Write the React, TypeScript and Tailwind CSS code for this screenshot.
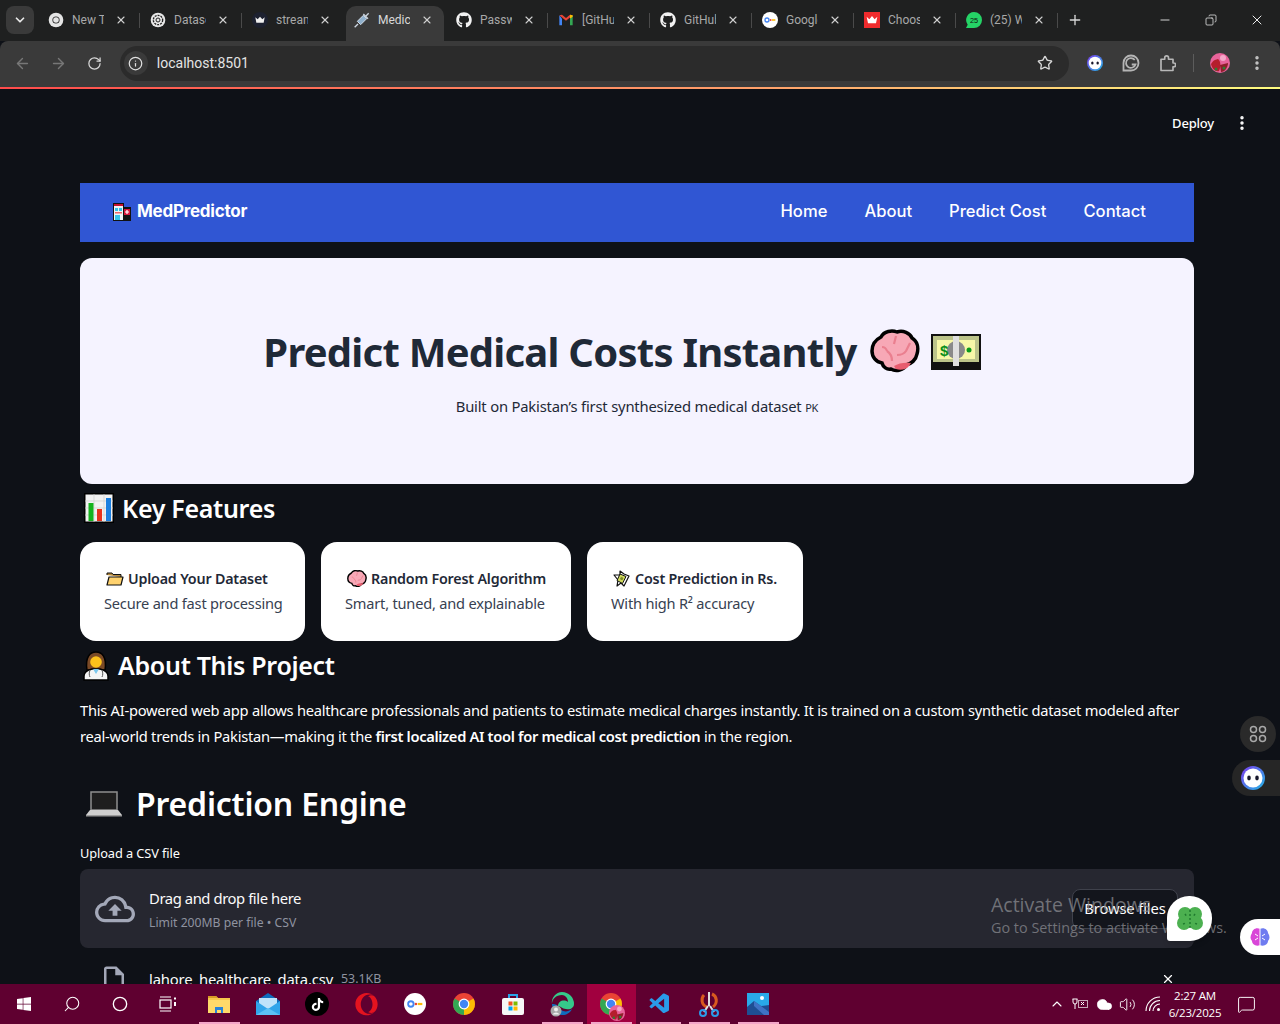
import React from "react";
import { ChevronDown, X, Plus, Minus, ArrowLeft, ArrowRight, RotateCw, Info, Star, EllipsisVertical, Copy, ChevronUp, Volume2, MessageSquare, Search, Circle, Cloud } from "lucide-react";
import { FaGithub, FaTiktok, FaWindows, FaOpera } from "react-icons/fa";
import { VscVscode } from "react-icons/vsc";
import { MdOutlineCloudUpload, MdOutlineInsertDriveFile } from "react-icons/md";

const body = "font-['Noto_Sans','Open_Sans',sans-serif]";

const ChromeLogo = ({ s = 16, mono = false }: { s?: number; mono?: boolean }) => (
  <svg width={s} height={s} viewBox="0 0 24 24">
    <circle cx="12" cy="12" r="11" fill={mono ? "#e5e5e5" : "#ea4335"} />
    {!mono && <path d="M12 12 L2.500 6.500 A11 11 0 0 0 12 23 Z" fill="#34a853" />}
    {!mono && <path d="M12 12 L12 23 A11 11 0 0 0 21.500 6.500 Z" fill="#fbbc04" />}
    <circle cx="12" cy="12" r="5.400" fill={mono ? "#202020" : "#fff"} />
    <circle cx="12" cy="12" r="4.200" fill={mono ? "#e5e5e5" : "#4285f4"} />
  </svg>
);

const PwKey = ({ s = 16 }: { s?: number }) => (
  <svg width={s} height={s} viewBox="0 0 24 24">
    <circle cx="12" cy="12" r="12" fill="#fff" />
    <circle cx="7.500" cy="12" r="3" fill="none" stroke="#4285f4" strokeWidth="2" />
    <circle cx="13" cy="12" r="1.400" fill="#ea4335" />
    <path d="M15 12h5" stroke="#fbbc04" strokeWidth="2.400" />
  </svg>
);

const Gmail = () => (
  <svg width="16" height="16" viewBox="0 0 24 24">
    <path d="M2 5v15h4V10z" fill="#4285f4" />
    <path d="M22 5v15h-4V10z" fill="#34a853" />
    <path d="M2 5l10 8 10-8-4-1-6 5-6-5z" fill="#ea4335" />
    <path d="M22 5l-4-1v6l4-3z" fill="#fbbc04" />
  </svg>
);

const Crown = () => (
  <svg width="16" height="16" viewBox="0 0 24 24">
    <rect width="24" height="24" fill="#ef2b2d" />
    <path d="M4 7l4 4 4-5 4 5 4-4-2 10H6z" fill="#fff" />
  </svg>
);

const tabs: { t: string; icon: React.ReactNode; active?: boolean; noSep?: boolean }[] = [
  { t: "New Tab", icon: <ChromeLogo mono /> },
  { t: "Datasets", icon: <svg width="16" height="16" viewBox="0 0 24 24"><circle cx="12" cy="12" r="11" fill="#e8e8e8" /><circle cx="12" cy="12" r="7" fill="none" stroke="#222" strokeWidth="2" strokeDasharray="3 1.500" /><circle cx="12" cy="12" r="3" fill="none" stroke="#222" strokeWidth="1.500" /></svg> },
  { t: "streamlit", noSep: true, icon: <svg width="16" height="16" viewBox="0 0 24 24"><circle cx="12" cy="12" r="12" fill="#1d2130" /><path d="M5 8l3.500 3L12 7l3.500 4L19 8l-1.500 8h-11z" fill="#f0f0f0" /></svg> },
  { t: "Medical", active: true, icon: <svg width="16" height="16" viewBox="0 0 24 24"><path d="M1 23l5-5" stroke="#cfd8e3" strokeWidth="2" /><path d="M5 14l5 5 9-9-5-5z" fill="#8fb0cc" stroke="#cfd8e3" strokeWidth="1.500" /><path d="M14 3l7 7M18 6l4-4" stroke="#c9d3dd" strokeWidth="2" /></svg> },
  { t: "Passwords", icon: <FaGithub size={16} color="#f2f2f2" /> },
  { t: "[GitHub]", icon: <Gmail /> },
  { t: "GitHub", icon: <FaGithub size={16} color="#f2f2f2" /> },
  { t: "Google", icon: <PwKey /> },
  { t: "Choose", icon: <Crown /> },
  { t: "(25) WhatsApp", icon: <svg width="16" height="16" viewBox="0 0 24 24"><path d="M12 0a12 12 0 0 1 0 24H0l2.500-5A12 12 0 0 1 12 0z" fill="#25d366" /><text x="12" y="16" fontSize="11" textAnchor="middle" fill="#111" fontFamily="Liberation Sans">25</text></svg> },
];

const Tab = ({ t, icon, active, noSep }: { t: string; icon: React.ReactNode; active?: boolean; noSep?: boolean }) => (
  <div className="relative flex h-[35px] w-[102px] shrink-0 items-center pb-[7px] pl-[10px]">
    {active && <span className="absolute inset-y-0 left-[2px] right-[2px] rounded-t-[10px] bg-[#3a3a3a]" />}
    <span className="relative flex w-4 shrink-0 justify-center">{icon}</span>
    <span className={`relative ml-2 w-[32px] overflow-hidden whitespace-nowrap font-['Roboto',sans-serif] text-[12px] ${active ? "text-[#d8d8d8]" : "text-[#a8a8a8]"}`}>{t}</span>
    <X size={12} strokeWidth={2.200} className="relative ml-[11px] shrink-0 text-[#d0d0d0]" />
    {!active && !noSep && <span className="absolute right-0 top-[7px] h-[15px] w-px bg-[#4a4a4a]" />}
  </div>
);

const TabBar = () => (
  <div className="flex h-[41px] shrink-0 items-end bg-[#1f2020] pl-[6px]">
    <div className="mb-[7px] mr-[4px] flex h-[28px] w-[28px] items-center justify-center rounded-lg bg-[#3a3a3a]">
      <ChevronDown size={14} strokeWidth={3} className="text-[#e8e8e8]" />
    </div>
    {tabs.map((x) => <Tab key={x.t} {...x} />)}
    <Plus size={16} strokeWidth={2} className="mb-[13px] ml-[9px] text-[#d8d8d8]" />
    <div className="mb-[13px] ml-auto flex items-center pr-[15px] text-[#ececec]">
      <Minus size={14} strokeWidth={1.500} />
      <Copy size={12} strokeWidth={1.500} className="ml-[33px] -scale-x-100" />
      <X size={16} strokeWidth={1.500} className="ml-[32px]" />
    </div>
  </div>
);

const ExtFace = ({ s = 16 }: { s?: number }) => (
  <svg width={s} height={s} viewBox="0 0 24 24">
    <defs><linearGradient id="fg" x1="0" y1="0" x2="1" y2="1"><stop offset="0" stopColor="#7c3aed" /><stop offset="1" stopColor="#22b8e6" /></linearGradient></defs>
    <circle cx="12" cy="12" r="12" fill="url(#fg)" />
    <circle cx="12" cy="12" r="9.500" fill="#fff" />
    <ellipse cx="8" cy="12" rx="1.800" ry="2.400" fill="#17172c" />
    <ellipse cx="16" cy="12" rx="1.800" ry="2.400" fill="#17172c" />
  </svg>
);

const Avatar = ({ s = 20 }: { s?: number }) => (
  <svg width={s} height={s} viewBox="0 0 20 20">
    <circle cx="10" cy="10" r="10" fill="#e8639a" />
    <path d="M1 11c3-5 5-4 7-5 3 2 3 8 1 12-3 1-7-2-8-7z" fill="#b51e2c" />
    <path d="M10 12l8-2c0 4-3 9-7 9z" fill="#8f1f2a" />
    <circle cx="6" cy="16" r="1.500" fill="#2f7d32" /><circle cx="14" cy="15" r="1.500" fill="#2f7d32" />
    <circle cx="13" cy="5" r="3" fill="#f4a7c8" />
  </svg>
);

const Toolbar = () => (
  <div className="flex h-[46px] shrink-0 items-center rounded-t-[8px] bg-[#3a3a3a] pb-[2px] pl-[14px] pr-[14px]">
    <ArrowLeft size={17} strokeWidth={2} className="text-[#777]" />
    <ArrowRight size={17} strokeWidth={2} className="ml-[19px] text-[#777]" />
    <RotateCw size={15} strokeWidth={2} className="ml-[20px] text-[#d8d8d8]" />
    <div className="ml-[18px] flex h-[35px] w-[953px] items-center rounded-full bg-[#2b2b2b] pl-[4px] pr-[16px]">
      <span className="flex h-[24px] w-[24px] items-center justify-center rounded-full bg-[#3a3a3a]"><Info size={15} className="text-[#e0e0e0]" /></span>
      <span className="ml-[9px] font-['Roboto',sans-serif] text-[14px] text-[#e4e4e4]">localhost:8501</span>
      <Star size={16} strokeWidth={2} className="ml-auto text-[#d8d8d8]" />
    </div>
    <div className="ml-[18px] flex items-center">
      <ExtFace />
      <svg className="ml-[19px]" width="18" height="18" viewBox="0 0 24 24" fill="none" stroke="#b5b5b5" strokeWidth="2.400"><path d="M12 2a10 10 0 0 0-10 10v10h10a10 10 0 0 0 0-20z" /><path d="M17 8a6.500 6.500 0 1 0 1 6h-5" /></svg>
      <svg className="ml-[18px]" width="18" height="18" viewBox="0 0 24 24" fill="none" stroke="#b8b8b8" strokeWidth="2.200" strokeLinejoin="round"><path d="M4 7h5V5a2.500 2.500 0 0 1 5 0v2h6v5h1a2.500 2.500 0 0 1 0 5h-1v5H4z" /></svg>
      <span className="ml-[17px] h-[18px] w-px bg-[#5c5c5c]" />
      <span className="ml-[16px]"><Avatar /></span>
      <EllipsisVertical size={18} strokeWidth={2.600} className="ml-[18px] text-[#c8c8c8]" />
    </div>
  </div>
);

/* ---------- emoji drawings ---------- */
const Brain = ({ s = 50 }: { s?: number }) => (
  <svg width={s} height={s} viewBox="0 0 50 50" className="shrink-0">
    <path d="M2 24c0-8 5-12 9-14 3-6 11-7 16-5 6-2 13 1 15 6 5 3 7 9 5 16-1 6-6 10-11 11-2 5-10 7-15 4-4 1-8-2-9-6-6-1-10-6-10-12z" fill="#f7a8b6" stroke="#000" strokeWidth="3.500" />
    <path d="M26 42c5 2 11 0 13-3l2-3c-5-1-13 0-17 3z" fill="#e85d6f" />
    <path d="M17 24c3 2 5 5 5 10M12 20c2 0 4 1 5 4M26 9l-2 8M36 24c-2 3-6 4-9 4M40 16l-4 8" fill="none" stroke="#ea7f8f" strokeWidth="2.200" />
  </svg>
);

const Money = ({ s = 50 }: { s?: number }) => (
  <svg width={s} height={(s * 36) / 50} viewBox="0 0 50 36" className="shrink-0">
    <rect x="0" y="0" width="50" height="36" fill="#111" />
    <rect x="2" y="2" width="46" height="26" fill="#bcc48a" />
    <rect x="6" y="6" width="38" height="19" fill="#f7f7a8" />
    <circle cx="25" cy="16" r="9" fill="#8a8a8a" />
    <text x="9" y="22" fontSize="15" fontWeight="700" fill="#0a8f1b" fontFamily="Liberation Sans">$</text>
    <circle cx="38" cy="16" r="2.500" fill="#0a9a1b" />
    <rect x="22" y="2" width="6" height="30" fill="#dfdfdf" />
  </svg>
);

const Hospital = () => (
  <svg width="18" height="18" viewBox="0 0 18 18" className="shrink-0">
    <rect x="0" y="0" width="11" height="18" fill="#111" />
    <rect x="1" y="1" width="9" height="16" fill="#eef3f6" />
    <rect x="1" y="1" width="9" height="2" fill="#c8102e" />
    <rect x="2" y="5" width="3" height="3" fill="#35c4e8" /><rect x="6" y="5" width="3" height="3" fill="#35c4e8" />
    <rect x="2" y="9" width="7" height="1.500" fill="#e66" /><rect x="2" y="12" width="5" height="5" fill="#35c4e8" />
    <rect x="10" y="4" width="8" height="14" fill="#111" />
    <rect x="11" y="6" width="6" height="6" fill="#d8163a" />
    <path d="M14 7v4M12 9h4" stroke="#fff" strokeWidth="1.200" />
  </svg>
);

const Chart = () => (
  <svg width="30" height="30" viewBox="0 0 30 30" className="shrink-0">
    <rect x="0" y="0" width="30" height="30" fill="#000" />
    <rect x="1.500" y="1.500" width="27" height="27" fill="#f2f2f2" />
    <path d="M1 8h28M1 15h28M1 22h28M10 1v28M20 1v28" stroke="#d0d0d0" strokeWidth=".7" />
    <rect x="4.500" y="10" width="5" height="18" fill="#16b31e" />
    <rect x="13" y="16" width="5" height="12" fill="#e8321c" />
    <rect x="22" y="5" width="5" height="23" fill="#1b7fe0" />
  </svg>
);

const Folder = () => (
  <svg width="18" height="14" viewBox="0 0 18 14" className="shrink-0">
    <path d="M1 3V1h5l1 1.500h8V5" fill="#b88a3a" stroke="#111" strokeWidth="1" />
    <path d="M3 5h14l-2 8H1z" fill="#ffd26e" stroke="#111" strokeWidth="1.200" strokeLinejoin="round" />
  </svg>
);

const MoneyWings = () => (
  <svg width="18" height="18" viewBox="0 0 18 18" className="shrink-0">
    <path d="M1 5l6 0 0-4 4 3 5 2-5 10-3-3-4 3 1-6z" fill="#fff" stroke="#111" strokeWidth="1.200" strokeLinejoin="round" />
    <path d="M7 4l6 2.500-3.500 7-5.500-3z" fill="#cfd85c" stroke="#111" strokeWidth="1" />
    <circle cx="8.700" cy="8.500" r="1.500" fill="#7d8a28" />
  </svg>
);

const Doctor = () => (
  <svg width="26" height="30" viewBox="0 0 26 30" className="shrink-0">
    <path d="M4 19C2 6 7 1 13 1s11 5 9 18z" fill="#7a4a26" stroke="#000" strokeWidth="1.500" />
    <circle cx="13" cy="11" r="5.800" fill="#fcc21b" />
    <path d="M1 29v-4c0-4 4-6 8-7h8c4 1 8 3 8 7v4z" fill="#f5f5f5" stroke="#000" strokeWidth="1.500" />
    <path d="M10 18l3 5 3-5z" fill="#7cc8ee" />
    <path d="M7 19c-1 3-1 5 0 7M19 19c1 3 1 5 0 7" stroke="#555" strokeWidth="1" fill="none" />
  </svg>
);

const Laptop = () => (
  <svg width="38" height="30" viewBox="0 0 38 30" className="shrink-0">
    <path d="M6 3h26v18H6z" fill="#1e1e1e" stroke="#8e8e8e" strokeWidth="1.500" />
    <path d="M5 21h28l4 5H1z" fill="#cfcfcf" />
    <rect x="1" y="26" width="36" height="1.500" fill="#9a9a9a" />
  </svg>
);

const Card = ({ icon, title, sub, cls }: { icon: React.ReactNode; title: string; sub: string; cls: string }) => (
  <div className={`flex h-[99px] flex-col justify-center rounded-2xl bg-white pl-[24px] ${cls}`}>
    <div className="flex h-[24px] items-center pl-[2px] pt-[2px] text-[14.300px] font-semibold leading-none tracking-[-0.2px] text-[#1f2937]">
      {icon}
      <span className="ml-[4px]">{title}</span>
    </div>
    <div className="mt-[1px] pb-[2px] text-[14.600px] leading-[24px] tracking-[-0.2px] text-[#374151]">{sub}</div>
  </div>
);

const Main = () => (
  <main className={`relative flex min-h-0 flex-1 flex-col overflow-hidden bg-[#0e1117] pl-[80px] pr-[86px] ${body}`}>
    <div className="flex h-[94px] shrink-0 items-start justify-end pt-[25px]">
      <div className="mr-[-57px] flex items-center">
        <span className="text-[13px] font-medium leading-[18px] tracking-[-0.2px] text-white">Deploy</span>
        <EllipsisVertical size={18} strokeWidth={2.600} className="ml-[19px] text-white" />
      </div>
    </div>

    <nav className="flex h-[59px] shrink-0 items-center justify-between bg-[#3056d3] pb-[2px] pl-[33px] pr-[48px] font-['Inter',sans-serif] text-white">
      <div className="flex items-center">
        <Hospital />
        <span className="ml-[6px] text-[17px] font-bold tracking-[-0.25px]">MedPredictor</span>
      </div>
      <div className="flex items-center gap-[37px] text-[16.600px] font-medium">
        <span>Home</span><span>About</span><span>Predict Cost</span><span>Contact</span>
      </div>
    </nav>

    <section className="mt-[16px] flex h-[226px] shrink-0 flex-col items-center rounded-xl bg-[#f5f3ff] pt-[63px]">
      <h1 className="flex h-[62px] items-center whitespace-nowrap pr-[30px] text-[40px] font-bold leading-none tracking-[-0.76px] text-[#1f2937]">
        Predict Medical Costs Instantly
        <span className="ml-[13px]"><Brain /></span>
        <span className="ml-[11px]"><Money /></span>
      </h1>
      <p className="mt-[11px] text-[14.800px] leading-[24px] tracking-[-0.2px] text-[#1f2937]">
        Built on Pakistan’s first synthesized medical dataset <span className="text-[11px]">PK</span>
      </p>
    </section>

    <h2 className="mt-[8px] flex h-[34px] shrink-0 items-center pb-[2px] pl-[4px] text-[25px] font-semibold leading-none tracking-[-0.3px] text-white">
      <Chart /><span className="ml-[8px]">Key Features</span>
    </h2>

    <div className="mt-[16px] flex shrink-0 gap-4">
      <Card cls="w-[225px]" icon={<Folder />} title="Upload Your Dataset" sub="Secure and fast processing" />
      <Card cls="w-[250px]" icon={<Brain s={20} />} title="Random Forest Algorithm" sub="Smart, tuned, and explainable" />
      <Card cls="w-[216px]" icon={<MoneyWings />} title="Cost Prediction in Rs." sub="With high R² accuracy" />
    </div>

    <h2 className="mt-[8px] flex h-[34px] shrink-0 items-center pb-[1px] pl-[3px] text-[25px] font-semibold leading-none tracking-[-0.3px] text-white">
      <Doctor /><span className="ml-[9px]">About This Project</span>
    </h2>

    <p className="mt-[14px] shrink-0 text-[14.700px] leading-[26px] tracking-[-0.26px] text-white">
      This AI-powered web app allows healthcare professionals and patients to estimate medical charges instantly. It is trained on a custom synthetic dataset modeled after real-world trends in Pakistan—making it the <strong className="font-semibold tracking-[-0.33px]">first localized AI tool for medical cost prediction</strong> in the region.
    </p>

    <h2 className="mt-[31px] flex h-[48px] shrink-0 items-center pl-[5px] text-[32px] font-semibold leading-none tracking-[-0.2px] text-white">
      <Laptop /><span className="ml-[13px]">Prediction Engine</span>
    </h2>

    <label className="mt-[16px] block h-[18px] shrink-0 text-[12.800px] leading-[18px] tracking-[-0.1px] text-white">Upload a CSV file</label>

    <div className="mt-[7px] flex h-[79px] shrink-0 items-center rounded-lg bg-[#262730] pl-[15px] pr-[16px]">
      <MdOutlineCloudUpload size={40} className="text-[#a3a8b8]" />
      <div className="ml-[14px]">
        <div className="text-[14.800px] leading-[24px] tracking-[-0.42px] text-[#fafafa]">Drag and drop file here</div>
        <div className="mt-[4px] text-[12.200px] leading-[18px] tracking-[0px] text-[#8f93a0]">Limit 200MB per file • CSV</div>
      </div>
      <span className="ml-auto flex h-[40px] w-[106px] items-center justify-center rounded-lg border border-[#3f414b] bg-[#13151c] text-[14.800px] tracking-[-0.15px] text-white">Browse files</span>
    </div>

    <div className="mt-[16px] flex shrink-0 items-center pl-[19px]">
      <MdOutlineInsertDriveFile size={30} className="text-[#a3a8b8]" />
      <span className="ml-[20px] text-[14.800px] leading-[24px] tracking-[-0.15px] text-[#fafafa]">lahore_healthcare_data.csv</span>
      <span className="ml-[8px] text-[12.400px] text-[#8f93a0]">53.1KB</span>
    </div>

    {/* floating overlays */}
    <div className="absolute bottom-[46px] left-[991px] font-['Open_Sans',sans-serif] text-[#8a8b90]/75">
      <div className="text-[19.500px] leading-[26px]">Activate Windows</div>
      <div className="text-[14.400px] leading-[20px]">Go to Settings to activate Windows.</div>
    </div>

    <div className="absolute bottom-[-2px] left-[1161px] text-white"><X size={14} strokeWidth={2} /></div>

    <div className="absolute left-[1240px] top-[627px] flex h-9 w-9 items-center justify-center rounded-full bg-[#2a2a2a]">
      <svg width="18" height="18" viewBox="0 0 18 18" fill="none" stroke="#a8a8a8" strokeWidth="1.500">
        <rect x="1.500" y="1.500" width="6" height="6" rx="3" /><rect x="10.500" y="1.500" width="6" height="6" rx="3" />
        <rect x="1.500" y="10.500" width="6" height="6" rx="3" /><rect x="10.500" y="10.500" width="6" height="6" rx="3" />
      </svg>
    </div>
    <div className="absolute left-[1232px] top-[671px] flex h-9 w-[48px] items-center rounded-l-full bg-[#262626] pl-[9px]"><ExtFace s={24} /></div>

    <div className="absolute left-[1167px] top-[807px] flex h-[45px] w-[45px] items-center justify-center rounded-[22px] rounded-bl-[3px] bg-white shadow-md">
      <svg width="30" height="30" viewBox="0 0 30 30">
        <circle cx="10" cy="10" r="7" fill="#4cb050" /><circle cx="20" cy="10" r="7" fill="#4cb050" />
        <circle cx="9" cy="19" r="7" fill="#4cb050" /><circle cx="21" cy="19" r="7" fill="#4cb050" />
        <path d="M15 6v20M10 10l2 3M20 10l-2 3M8 20l3-1M22 20l-3-1" stroke="#1f7a2e" strokeWidth="1.500" strokeDasharray="2 2" />
      </svg>
    </div>

    <div className="absolute left-[1240px] top-[830px] flex h-9 w-[40px] items-center rounded-l-full bg-white pl-[10px]">
      <svg width="20" height="20" viewBox="0 0 20 20">
        <path d="M10 2C6 0 2 3 2 6c-2 3-2 6 0 8 0 3 4 6 8 4z" fill="#d946d8" />
        <path d="M10 2c4-2 8 1 8 4 2 3 2 6 0 8 0 3-4 6-8 4z" fill="#6f7cf0" />
        <path d="M10 2v16M5 7l3 2M15 7l-3 2M5 13l3-2M15 13l-3-2" stroke="#fff" strokeWidth="1" />
      </svg>
    </div>
  </main>
);

const TI = ({ children, on, wide, hl, cls = "" }: { children: React.ReactNode; on?: boolean; wide?: boolean; hl?: boolean; cls?: string }) => (
  <div className={`relative flex h-full items-center justify-center ${wide ? "w-[48px]" : "w-[49px]"} ${hl ? "bg-[#a1003f]" : ""} ${cls}`}>
    {children}
    {on && <span className="absolute bottom-0 left-[4px] right-[4px] h-[2px] bg-[#f2a6c8]" />}
  </div>
);

const Taskbar = () => (
  <footer className="flex h-10 shrink-0 items-center bg-[#5f0030] text-white">
    <TI wide><FaWindows size={16} /></TI>
    <TI wide><Search size={18} strokeWidth={1.400} className="-scale-x-100" /></TI>
    <TI wide><Circle size={16} strokeWidth={2} /></TI>
    <TI wide>
      <svg width="18" height="16" viewBox="0 0 18 16" fill="none" stroke="#fff" strokeWidth="1.200"><path d="M1 1h11M1 15h11" /><rect x="1" y="4" width="11" height="8" /><rect x="15" y="1.500" width="2" height="2" fill="#fff" stroke="none" /><rect x="15" y="6" width="2" height="4" fill="#fff" stroke="none" /></svg>
    </TI>
    <TI on cls="ml-[2.500px]">
      <svg width="22" height="20" viewBox="0 0 22 20"><path d="M0 2h8l2 2h12v15H0z" fill="#f5c84c" /><path d="M0 2h8l2 2H0z" fill="#d89b25" /><path d="M0 6h22v13H0z" fill="#ffd96a" /><path d="M7 19v-6h8v6h-2v-3H9v3z" fill="#2a83d8" /></svg>
    </TI>
    <TI>
      <svg width="24" height="22" viewBox="0 0 24 22"><path d="M12 0l12 8v14H0V8z" fill="#0f6cbd" /><path d="M3 5h18v10l-9 4-9-4z" fill="#bfe3fa" /><path d="M0 8l12 8 12-8v14H0z" fill="#31a5ea" /><path d="M0 22l12-7 12 7z" fill="#5cc1f5" /></svg>
    </TI>
    <TI><span className="flex h-6 w-6 items-center justify-center rounded-full bg-black"><FaTiktok size={13} color="#fff" /></span></TI>
    <TI><FaOpera size={23} color="#e3131f" /></TI>
    <TI><PwKey s={22} /></TI>
    <TI><ChromeLogo s={24} /></TI>
    <TI>
      <svg width="24" height="24" viewBox="0 0 24 24"><path d="M8 6V3h8v3" fill="none" stroke="#2aa4e8" strokeWidth="2" /><rect x="1" y="6" width="22" height="17" rx="2" fill="#f7f7f7" /><rect x="7.500" y="9.500" width="4" height="4" fill="#f25022" /><rect x="12.500" y="9.500" width="4" height="4" fill="#7fba00" /><rect x="7.500" y="14.500" width="4" height="4" fill="#00a4ef" /><rect x="12.500" y="14.500" width="4" height="4" fill="#ffb900" /></svg>
    </TI>
    <TI on>
      <svg width="26" height="26" viewBox="0 0 26 26"><path d="M13 1a12 12 0 0 1 12 12c0 4-4 6-8 5-4 0-5-3-8-3 0-5 6-7 10-4 0-4-3-7-6-7C7 4 3 8 3 13c-1-6 4-12 10-12z" fill="#35c98a" /><path d="M3 13c0 6 5 12 11 11 3 0 7-2 9-6-4 3-8 3-11 1-3-1-3-4-3-4-2-2-5-2-6-2z" fill="#0f6cbd" /><circle cx="7" cy="20" r="5.500" fill="#a8a8a8" /><circle cx="7" cy="18.500" r="2" fill="#eee" /><path d="M3.500 23.500a4 4 0 0 1 7 0z" fill="#eee" /></svg>
    </TI>
    <TI on hl>
      <span className="relative flex"><ChromeLogo s={24} /><span className="absolute -bottom-[5px] left-[10px]"><Avatar s={16} /></span></span>
    </TI>
    <TI on><VscVscode size={24} color="#2a9bea" /></TI>
    <TI on>
      <svg width="22" height="26" viewBox="0 0 22 26" fill="none"><path d="M6 4c-3 3-3 10 3 12M14 3c5 2 6 9 1 13" stroke="#d85a1f" strokeWidth="3" /><path d="M11 1v14M12 15l4 6M10 15l-4 6" stroke="#e0e0e0" strokeWidth="2" /><circle cx="5" cy="22" r="3" stroke="#2a9bea" strokeWidth="2" /><circle cx="17" cy="22" r="3" stroke="#2a9bea" strokeWidth="2" /></svg>
    </TI>
    <TI on>
      <svg width="22" height="22" viewBox="0 0 22 22"><rect width="22" height="22" fill="#29a9e8" /><path d="M0 22V14l7-6 7 5 8-1v10z" fill="#1e4e93" /><path d="M7 8l7 5 8 6v3h-5L7 13z" fill="#3f72c4" /><circle cx="15" cy="5" r="2" fill="#fff" /></svg>
    </TI>
    <div className="ml-auto flex h-full items-center font-['Open_Sans',sans-serif]">
      <ChevronUp size={16} strokeWidth={1.600} />
      <svg className="ml-[7px]" width="16" height="12" viewBox="0 0 16 12" fill="none" stroke="#fff" strokeWidth="1"><path d="M1 1v3a2 2 0 0 0 4 0V1M3 6v5M0.500 1h5" /><rect x="6.500" y="2.500" width="9" height="7" stroke="#c8a8b8" /><path d="M9 4l3 3M12 4l-3 3" /></svg>
      <Cloud size={17} fill="#fff" strokeWidth={1} className="ml-[8px]" />
      <Volume2 size={17} strokeWidth={1.300} className="ml-[6px]" />
      <svg className="ml-[9px]" width="16" height="16" viewBox="0 0 16 16" fill="none" stroke="#fff" strokeWidth="1.100"><path d="M1 15A14 14 0 0 1 15 1M4.500 15A10.500 10.500 0 0 1 15 4.500M8 15a7 7 0 0 1 7-7" /><circle cx="13.500" cy="13.500" r="1.500" fill="#fff" stroke="none" /></svg>
      <div className="ml-[6px] flex w-[56px] flex-col items-center text-[11.500px] leading-[17px] tracking-[-0.2px]">
        <span>2:27 AM</span><span className="whitespace-nowrap">6/23/2025</span>
      </div>
      <MessageSquare size={19} strokeWidth={1.200} className="ml-[14px] mr-[24px]" />
    </div>
  </footer>
);

export default function App() {
  return (
    <div className="flex h-[1024px] w-[1280px] flex-col overflow-hidden bg-[#0e1117]">
      <TabBar />
      <Toolbar />
      <div className="h-[2px] shrink-0 bg-[linear-gradient(90deg,#ff4b4b,#ffa26b_60%,#fffd80)]" />
      <Main />
      <Taskbar />
    </div>
  );
}
